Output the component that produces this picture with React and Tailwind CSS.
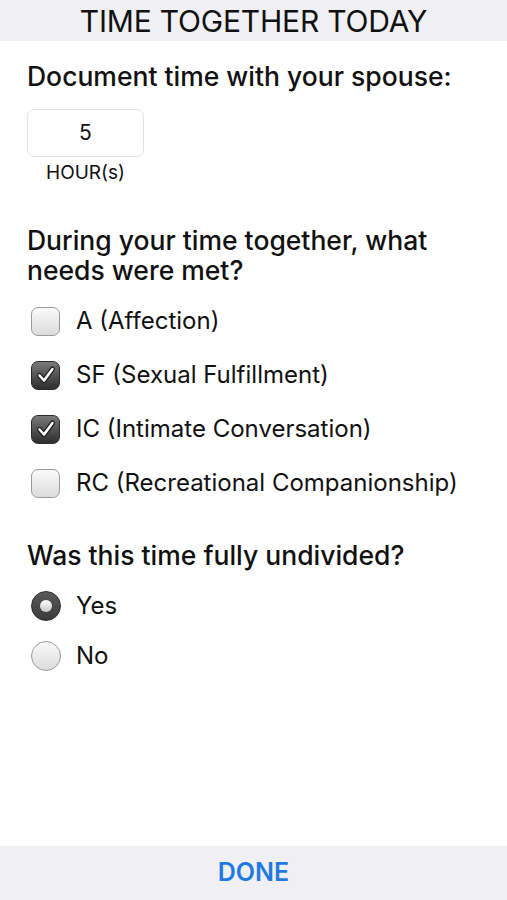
import { useState } from 'react';

const NEEDS = [
  { key: 'A', label: 'A (Affection)' },
  { key: 'SF', label: 'SF (Sexual Fulfillment)' },
  { key: 'IC', label: 'IC (Intimate Conversation)' },
  { key: 'RC', label: 'RC (Recreational Companionship)' },
];

function CheckBox({ checked }) {
  return (
    <span
      className={`flex h-[29px] w-[29px] shrink-0 items-center justify-center rounded-[7px] border ${
        checked
          ? 'border-[#2b2b2b] bg-gradient-to-b from-[#7a7a7a] to-[#2e2e2e]'
          : 'border-[#9a9a9a] bg-gradient-to-b from-[#fafafa] to-[#dcdcdc]'
      }`}
    >
      {checked && (
        <svg width="20" height="20" viewBox="0 0 20 20">
          <path d="M3.5 10.5 L8 15.5 L16.5 4" fill="none" stroke="#1e1e1e" strokeWidth="5" strokeLinecap="round" strokeLinejoin="round" />
          <path d="M3.5 10.5 L8 15.5 L16.5 4" fill="none" stroke="#ffffff" strokeWidth="2.6" strokeLinecap="round" strokeLinejoin="round" />
        </svg>
      )}
    </span>
  );
}

function Radio({ checked }) {
  return (
    <span
      className={`flex h-[30px] w-[30px] shrink-0 items-center justify-center rounded-full border ${
        checked
          ? 'border-[#2b2b2b] bg-gradient-to-b from-[#5a5a5a] to-[#3a3a3a]'
          : 'border-[#9a9a9a] bg-gradient-to-b from-[#fafafa] to-[#dcdcdc]'
      }`}
    >
      {checked && <span className="h-[12px] w-[12px] rounded-full bg-gradient-to-b from-[#ffffff] to-[#c8c8c8]" />}
    </span>
  );
}

export default function App() {
  const [checked, setChecked] = useState({ A: false, SF: true, IC: true, RC: false });
  const [undivided, setUndivided] = useState(true);

  return (
    <div className="flex h-[900px] w-full flex-col bg-white font-['Inter',sans-serif] text-[#111]">
      <div className="flex h-[41px] items-center justify-center bg-[#efeff4] text-[30px] leading-none tracking-[-0.2px]">
        TIME TOGETHER TODAY
      </div>

      <div className="flex flex-1 flex-col px-[27px]">
        <h2 className="mt-[20px] text-[26.5px] font-medium leading-[30px]">
          Document time with your spouse:
        </h2>

        <div className="mt-[18px] flex w-[117px] flex-col items-center">
          <div className="flex h-[48px] w-[117px] items-center justify-center rounded-[7px] border border-[#e3e3e6] text-[21px]">
            5
          </div>
          <span className="mt-[4px] text-[19px] leading-[24px]">HOUR(s)</span>
        </div>

        <h2 className="mt-[40px] text-[26.5px] font-medium leading-[30px]">
          During your time together, what
          <br />
          needs were met?
        </h2>

        <div className="mt-[9px] flex flex-col">
          {NEEDS.map((n) => (
            <label
              key={n.key}
              className="flex h-[54px] cursor-pointer items-center gap-[16px] pl-[4px] text-[24px]"
              onClick={() => setChecked((c) => ({ ...c, [n.key]: !c[n.key] }))}
            >
              <CheckBox checked={checked[n.key]} />
              <span className="whitespace-nowrap">{n.label}</span>
            </label>
          ))}
        </div>

        <h2 className="mt-[30px] text-[26.5px] font-medium leading-[30px]">
          Was this time fully undivided?
        </h2>

        <div className="mt-[11px] flex flex-col">
          {[
            { label: 'Yes', value: true },
            { label: 'No', value: false },
          ].map((o) => (
            <label
              key={o.label}
              className="flex h-[50px] cursor-pointer items-center gap-[15px] pl-[4px] text-[24px]"
              onClick={() => setUndivided(o.value)}
            >
              <Radio checked={undivided === o.value} />
              <span>{o.label}</span>
            </label>
          ))}
        </div>
      </div>

      <button className="flex h-[54px] items-center justify-center bg-[#efeff4] text-[25px] font-semibold text-[#1f7ae0]">
        DONE
      </button>
    </div>
  );
}
